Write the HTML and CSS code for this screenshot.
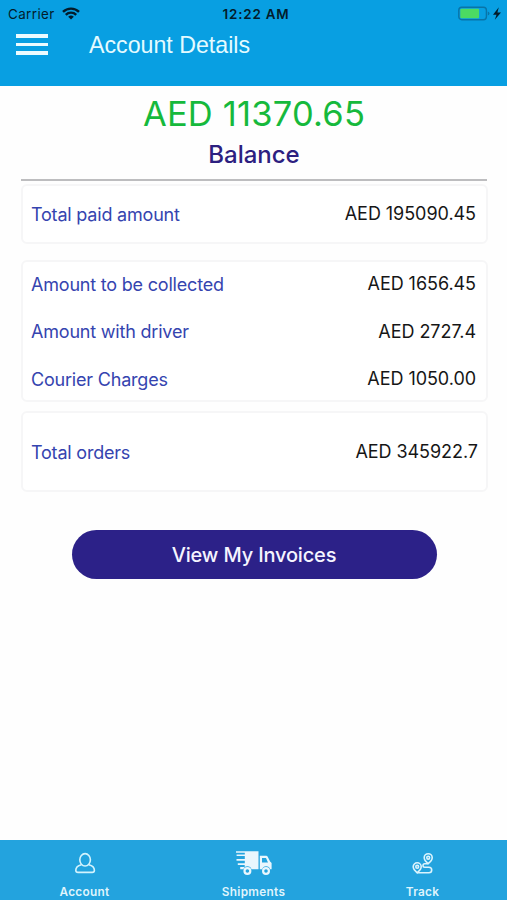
FILE: index.html
```
<!DOCTYPE html>
<html lang="en">
<head>
  <meta charset="UTF-8" />
  <meta name="viewport" content="width=device-width, initial-scale=1.0" />
  <title>Account Details</title>
  <link rel="stylesheet" href="styles.css">
</head>
<body>
  <header>
    <div class="status-bar">
      <div class="carrier">
        <span>Carrier</span>
        <svg width="18" height="13" viewBox="0 0 18 13" fill="none" stroke="#031c2b" stroke-width="2.4">
          <path d="M1 4.9a11.3 11.3 0 0 1 16 0" />
          <path d="M3.8 7.8a7.4 7.4 0 0 1 10.4 0" />
          <path d="M9 12.6L6.2 9.8a4 4 0 0 1 5.6 0z" fill="#031c2b" stroke="none" />
        </svg>
      </div>
      <span class="time">12:22 AM</span>
      <div class="power">
        <svg width="44" height="16" viewBox="0 0 44 16">
          <rect x=".8" y="1.3" width="27.6" height="12.4" rx="3" fill="none" stroke="#0874a8" stroke-width="1.4" />
          <rect x="2.3" y="2.8" width="18.8" height="9.4" rx="1" fill="#4cdb62" />
          <path d="M29.8 5.5v4q1.7-.5 1.7-2t-1.7-2z" fill="#0874a8" />
          <path d="M40.8 1.3L35 8.8h3.5l-1.7 5L43 6.4h-3.6z" fill="#031c2b" />
        </svg>
      </div>
    </div>
    <div class="title-bar">
      <button class="menu" aria-label="Menu"><i></i><i></i><i></i></button>
      <h1>Account Details</h1>
    </div>
  </header>

  <main>
    <div class="total">AED 11370.65</div>
    <h2>Balance</h2>

    <section class="card paid">
      <div class="row"><span class="label">Total paid amount</span><span class="value">AED 195090.45</span></div>
    </section>

    <section class="card amounts">
      <div class="row"><span class="label">Amount to be collected</span><span class="value">AED 1656.45</span></div>
      <div class="row"><span class="label">Amount with driver</span><span class="value">AED 2727.4</span></div>
      <div class="row"><span class="label">Courier Charges</span><span class="value">AED 1050.00</span></div>
    </section>

    <section class="card orders">
      <div class="row"><span class="label">Total orders</span><span class="value">AED 345922.7</span></div>
    </section>

    <button class="invoices">View My Invoices</button>
  </main>

  <nav>
    <a class="tab">
      <svg width="22" height="24" viewBox="0 0 22 24" fill="none" stroke="#d4f3fd" stroke-width="1.6">
        <ellipse cx="11.1" cy="9.8" rx="5.3" ry="6.2" />
        <path d="M7.4 14.7Q1.8 16.1 1.8 20.3q0 2.1 2.2 2.1h14.2q2.2 0 2.2-2.1 0-4.2-5.6-5.6" />
      </svg>
      <span>Account</span>
    </a>
    <a class="tab">
      <svg width="37" height="26" viewBox="0 0 37 26">
        <path d="M1 1.2h22.5v18.1h-7a4.2 4.2 0 0 0-8.1 0H5.2v-2.4h4.5v-1.8H2.8v-1.8h7v-2.5H1.5V9h8.3V6H1.6V4.5h8.2V2.8H1z" fill="#e9f6fd" />
        <path d="M24.8 5.8h6.4q1 0 1.5 1l2.4 4.6 1.5 1.5v6.4h-1.4a4.2 4.2 0 0 0-8.1 0h-2.3zM27 8v4.4h6L31 8z" fill="#e9f6fd" fill-rule="evenodd" />
        <g fill="none" stroke="#e9f6fd" stroke-width="2.2">
          <circle cx="12.4" cy="21" r="2.9" />
          <circle cx="31" cy="21" r="2.9" />
        </g>
      </svg>
      <span>Shipments</span>
    </a>
    <a class="tab">
      <svg width="22" height="24" viewBox="0 0 22 24" fill="none" stroke="#dcf4fd" stroke-width="1.6">
        <g transform="translate(0 2.5)">
          <path d="M16.2 11.2Q12.2 7.8 12.2 5.2a4 4 0 0 1 8 0q0 2.6-4 6z" />
          <circle cx="16.2" cy="5.2" r="1.4" />
          <path d="M5.2 20.3Q1.2 16.9 1.2 14.3a4 4 0 0 1 8 0q0 2.6-4 6z" />
          <circle cx="5.2" cy="14.3" r="1.4" />
          <path d="M16 11.3h-3.3q-1.7 0-1.7 1.7t1.7 1.7h4.2a2.8 2.8 0 0 1 0 5.6H5.2" />
        </g>
      </svg>
      <span>Track</span>
    </a>
  </nav>
</body>
</html>
```

FILE: styles.css
```
* {
  box-sizing: border-box;
}
body {
  font-family: 'Inter', sans-serif;
  background: #fefefe;
  margin: 0;
  height: 900px;
  display: flex;
  flex-direction: column;
}
header {
  background: #089fe2;
  height: 86px;
}
.status-bar {
  height: 27px;
  padding: 0 5px 0 8px;
  display: grid;
  grid-template-columns: 1fr auto 1fr;
  align-items: center;
  color: #031c2b;
  font-size: 13.4px;
}
.carrier {
  display: flex;
  align-items: center;
  gap: 7px;
  letter-spacing: 0.4px;
}
.time {
  font-weight: 600;
  letter-spacing: 0.8px;
  padding-left: 2px;
}
.power {
  display: flex;
  justify-content: flex-end;
}
.title-bar {
  display: flex;
  align-items: center;
  height: 35px;
  padding-left: 16px;
}
.menu {
  display: flex;
  flex-direction: column;
  gap: 5px;
  width: 32px;
  padding: 0;
  border: none;
  background: none;
}
.menu i {
  height: 3.6px;
  background: #ecfbff;
}
h1 {
  margin: 2px 0 0 41px;
  font: 400 23.2px 'Liberation Sans', sans-serif;
  color: #e4fbff;
}
main {
  flex: 1;
  padding: 7px 20px 0 21px;
  display: flex;
  flex-direction: column;
}
.total {
  height: 42px;
  line-height: 42px;
  text-align: center;
  font-size: 34.5px;
  letter-spacing: 0.2px;
  color: #16b93c;
}
h2 {
  margin: 0 0 3px;
  height: 46px;
  line-height: 40px;
  text-align: center;
  font-size: 24px;
  font-weight: 500;
  color: #2c2080;
  border-bottom: 2px solid #bdbdbf;
}
.card {
  margin-right: -1px;
  border: 2px solid #f6f6f7;
  border-radius: 6px;
  background: #fff;
  padding: 0 10px 0 8px;
}
.row {
  display: flex;
  justify-content: space-between;
  align-items: center;
  height: 47.5px;
  font-size: 18px;
}
.label {
  color: #3544af;
  padding-top: 1px;
  letter-spacing: -0.2px;
}
.value {
  color: #161616;
  letter-spacing: -0.05px;
}
.paid {
  height: 60px;
  padding-top: 4px;
}
.amounts {
  height: 142px;
  margin: 16px -1px 9px 0;
}
.amounts .row {
  margin-top: -4px;
  height: 51.5px;
}
.orders {
  height: 81px;
  padding: 15px 8px 0 8px;
}
.invoices {
  width: 365px;
  height: 49px;
  margin: 38px 51px 0 50.5px;
  border: none;
  border-radius: 25px;
  background: #2c2188;
  color: #f5f4ff;
  font: 500 20px 'Inter', sans-serif;
  letter-spacing: -0.17px;
}
nav {
  height: 60px;
  background: #23a3de;
  display: grid;
  grid-template-columns: repeat(3, 1fr);
}
.tab {
  display: flex;
  flex-direction: column;
  align-items: center;
  justify-content: space-between;
  padding: 10px 0 0;
  font-size: 11.8px;
  font-weight: 600;
  line-height: 15px;
  letter-spacing: 0.3px;
  color: #dff4fc;
}
```
